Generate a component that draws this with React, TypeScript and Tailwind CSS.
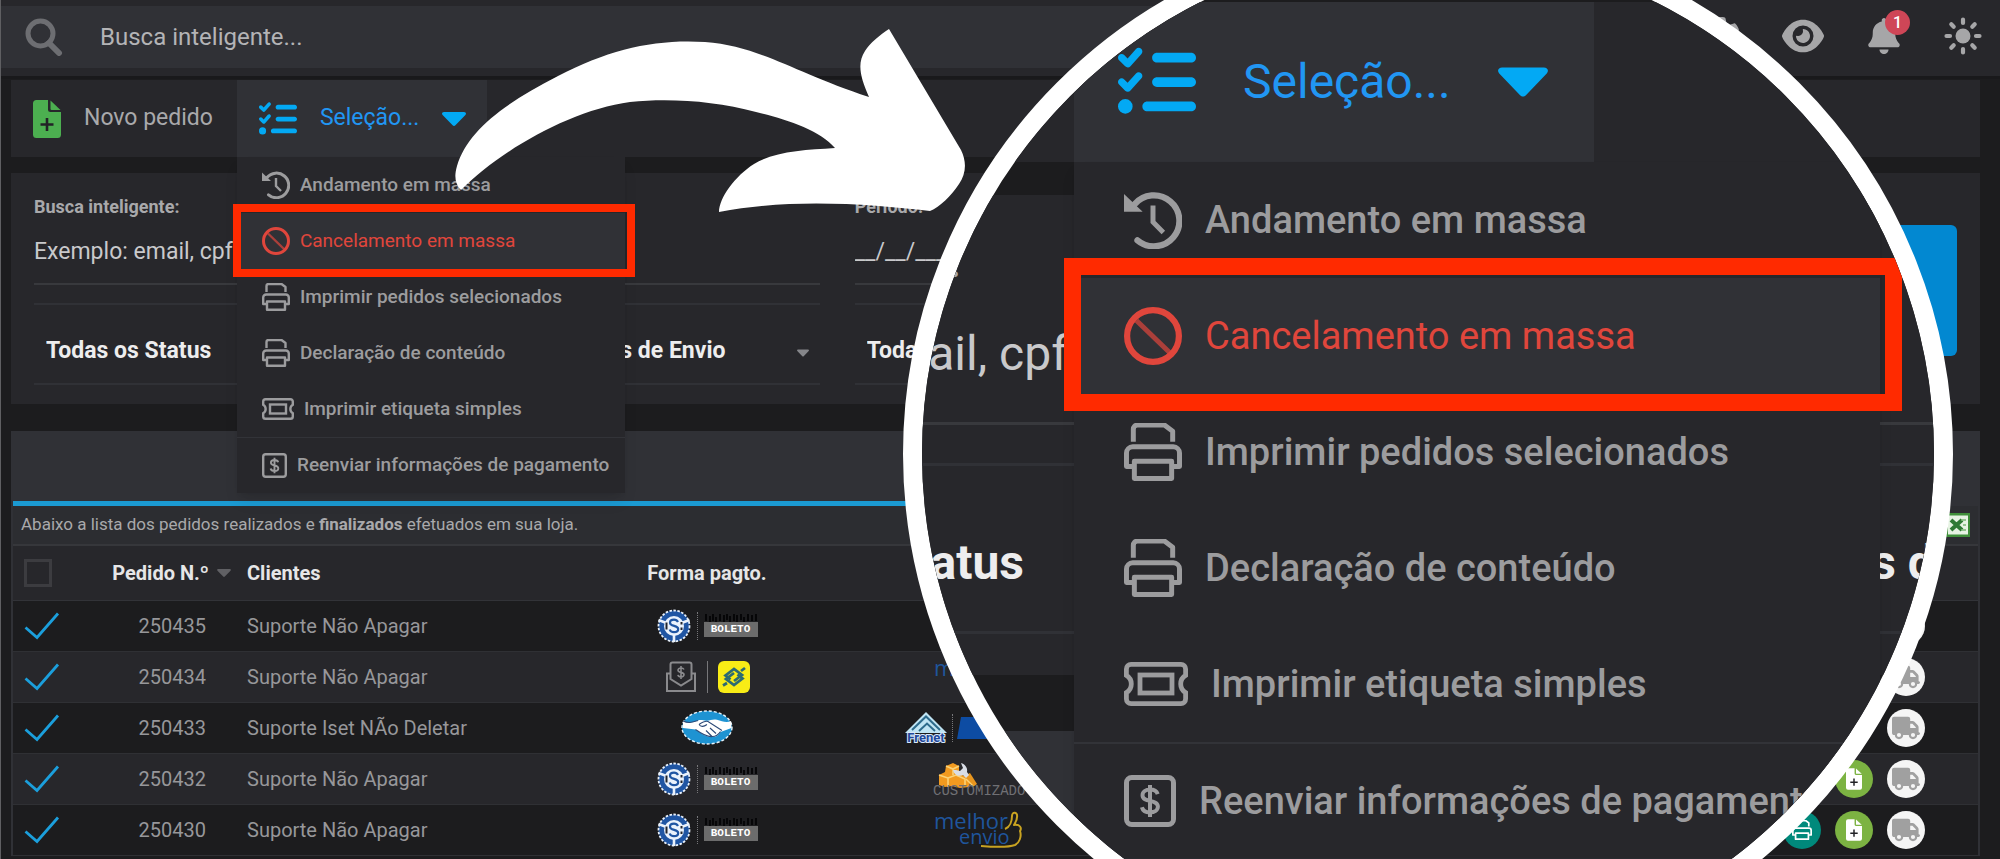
import React from 'react';
import { FaBell, FaEye, FaGear, FaListCheck, FaTruck } from 'react-icons/fa6';

type IconProps = { className?: string };
type Size = 'sm' | 'lg';

const SearchIcon = ({ className }: IconProps) => (
  <svg viewBox="0 0 38 38" fill="none" stroke="currentColor" className={className}>
    <circle cx="15.5" cy="15.5" r="12.5" strokeWidth="5" />
    <path d="M24 25l10 10" strokeWidth="6" strokeLinecap="round" />
  </svg>
);

const FilePlusIcon = ({ className }: IconProps) => (
  <svg viewBox="0 0 28 38" className={className}>
    <path d="M3.5 0H15v9.500a2.500 2.500 0 0 0 2.500 2.500H28v22.500a3.500 3.500 0 0 1-3.500 3.500h-21A3.500 3.500 0 0 1 0 34.500v-31A3.500 3.500 0 0 1 3.500 0z" fill="currentColor" />
    <path d="M17.500 .5L27.500 10h-9a1 1 0 0 1-1-1z" fill="currentColor" />
    <path d="M14 18v13M7.500 24.500h13" stroke="#222226" strokeWidth="2.6" />
  </svg>
);

const CaretIcon = ({ className }: IconProps) => (
  <svg viewBox="0 0 24 14" className={className}>
    <path d="M2 0h20c1.800 0 2.600 1.600 1.400 2.900L13.400 13.300c-.8.900-2 .9-2.800 0L.6 2.900C-.6 1.600.2 0 2 0z" fill="currentColor" />
  </svg>
);

const HistoryIcon = ({ className }: IconProps) => (
  <svg viewBox="0 0 28 28" fill="none" stroke="currentColor" className={className}>
    <path d="M5 6.500A12.300 12.300 0 1 1 6.500 23.800" strokeWidth="3" strokeLinecap="round" />
    <path d="M0 1.500l9 8.500H0z" fill="currentColor" stroke="none" />
    <path d="M14 7v8l5 5" strokeWidth="2.4" />
  </svg>
);

const BanIcon = ({ className }: IconProps) => (
  <svg viewBox="0 0 28 28" fill="none" stroke="currentColor" className={className}>
    <circle cx="14" cy="14" r="12.5" strokeWidth="3" />
    <path d="M6 6.500l16 15.500" strokeWidth="2.4" opacity=".7" />
  </svg>
);

const PrinterIcon = ({ className }: IconProps) => (
  <svg viewBox="0 0 28 28" fill="none" stroke="currentColor" strokeWidth="2.4" strokeLinejoin="round" className={className}>
    <path d="M4.500 9V3a2 2 0 0 1 2-2h13l4 3v5" />
    <path d="M4.500 21H1.200v-6.500a3 3 0 0 1 3-3h19.600a3 3 0 0 1 3 3V21h-3.300" />
    <path d="M5 18.500h18v8.300H5z" />
  </svg>
);

const TicketIcon = ({ className }: IconProps) => (
  <svg viewBox="0 0 32 22" fill="none" stroke="currentColor" strokeWidth="2.4" className={className}>
    <path d="M3.500 1.200h25a2.300 2.300 0 0 1 2.300 2.300v3.200a5 5 0 0 0 0 8.600v3.200a2.300 2.300 0 0 1-2.300 2.300h-25a2.300 2.300 0 0 1-2.300-2.300v-3.200a5 5 0 0 0 0-8.600V3.500a2.300 2.300 0 0 1 2.300-2.300z" />
    <rect x="8" y="6.5" width="16" height="9" />
  </svg>
);

const DollarIcon = ({ className }: IconProps) => (
  <svg viewBox="0 0 25 25" fill="none" stroke="currentColor" className={className}>
    <rect x="1.2" y="1.2" width="22.6" height="22.6" rx="2.5" strokeWidth="2.4" />
    <path d="M16.200 9.200c-.5-1.500-1.900-2.200-3.700-2.200-2 0-3.600 1-3.600 2.700 0 3.800 7.400 1.700 7.400 5.500 0 1.800-1.700 2.800-3.800 2.800s-3.500-.9-3.900-2.500M12.500 4.800v15.400" strokeWidth="1.9" />
  </svg>
);

const SunIcon = ({ className }: IconProps) => (
  <svg viewBox="0 0 38 38" fill="none" stroke="currentColor" strokeWidth="4.2" strokeLinecap="round" className={className}>
    <circle cx="19" cy="19" r="7.5" fill="currentColor" stroke="none" />
    <path d="M19 2.500v3.500M19 32v3.500M2.500 19H6M32 19h3.500M7.300 7.300l2.400 2.400M28.300 28.300l2.400 2.400M7.300 30.700l2.400-2.400M28.300 9.700l2.400-2.400" />
  </svg>
);

const TickIcon = ({ className }: IconProps) => (
  <svg viewBox="0 0 36 28" fill="none" stroke="#1b9fdc" strokeWidth="2.8" className={className}>
    <path d="M1.500 15.500L13 25.500 34 1.500" />
  </svg>
);

const DepositIcon = () => (
  <svg viewBox="0 0 32 32" fill="none" stroke="#8a8a8d" strokeWidth="2" className="size-8">
    <path d="M5 12.500H2v17.500h28V12.500h-3" />
    <path d="M5.500 18V3.500a2 2 0 0 1 2-2h17a2 2 0 0 1 2 2V18L16 24.500z" />
    <path d="M19 8.500c-.5-1-1.600-1.500-3-1.500-1.700 0-3 .8-3 2.200 0 3 6 1.400 6 4.400 0 1.500-1.400 2.300-3 2.300s-2.800-.7-3.100-2M16 5v13" strokeWidth="1.6" />
  </svg>
);

const IssIcon = () => (
  <svg viewBox="0 0 34 34" className="size-[34px]">
    <circle cx="17" cy="17" r="15.5" fill="#1f55a3" stroke="#e9f1fb" strokeWidth="1.8" strokeDasharray="2.5 1.500" />
    <circle cx="17" cy="17" r="10" fill="#eaf2fc" />
    <path d="M1.500 11l8 3M32.500 11l-8 3M17 25v8" stroke="#eaf2fc" strokeWidth="2.6" />
    <path d="M21 13c-.8-1.600-2.200-2.300-4-2.300-2.300 0-4 1.100-4 3 0 4.200 8.200 2.200 8.200 6.300 0 2-1.900 3.200-4.200 3.200-2.200 0-3.800-1-4.300-2.700" fill="none" stroke="#1f55a3" strokeWidth="2.2" />
    <path d="M9.500 13.500v7M24.500 13v2.500M24.500 18.500v2.500" stroke="#20242c" strokeWidth="2" />
  </svg>
);

const BbIcon = () => (
  <svg viewBox="0 0 32 32" className="size-8">
    <rect width="32" height="32" rx="6" fill="#f8ec16" />
    <g fill="none" stroke="#2c6a72" strokeWidth="2.8">
      <path d="M12.500 18.500L7.500 14.500 16 8l8 6-8 6" />
      <path d="M19.500 13.500l5 4L16 24l-8-6 8-6" />
      <path d="M5 24.500l4-2.500M23 10l4-3" />
    </g>
  </svg>
);

const HandshakeIcon = () => (
  <svg viewBox="0 0 52 35" className="h-[35px] w-[52px]">
    <ellipse cx="26" cy="17.5" rx="25" ry="16.5" fill="#1e93d2" stroke="#e8f4fc" strokeWidth="1.4" strokeDasharray="3 2" />
    <path d="M2 11c6 3 10 1 15-.5 4-1.200 6 .6 9 .2 3.500-.4 6-2 10-1 5 1.300 9 3.500 14 1.300l.5 7-11 4c-2 3-4 5-8 5-6 .7-12-4-17-7.500L2 18z" fill="#fff" />
    <path d="M2 11c6 3 10 1 15-.5M18 14.500c3-2 6-4 9-3l14 9M25 20.500l6 6M29 18l6 5.500M18 14.500c2 3 5 2 8 0M14.500 19.500c5 3.500 11 8 17 7 4 0 6-2 8-5" fill="none" stroke="#2d4a78" strokeWidth="1.1" />
  </svg>
);

const FrenetIcon = () => (
  <svg viewBox="0 0 44 32" className="h-8 w-11">
    <path d="M22 0l21 21H1z" fill="#bfe4f3" />
    <path d="M8 18L22 4.500 36 18M15 19l8-7.500L31 19" fill="none" stroke="#2d6b8c" strokeWidth="2" />
    <text x="22" y="30" textAnchor="middle" fontSize="13" fontWeight="700" fill="#20489a" stroke="#dbe9fa" strokeWidth="2" paintOrder="stroke" fontFamily="Roboto">Frenet</text>
  </svg>
);

const CustomizadoIcon = () => (
  <svg viewBox="0 0 92 34" className="h-[34px] w-[92px]">
    <path d="M6 13l6-3 1-6 7-3 6 3v8l12 4-2 9-9 1-8-2-7 1-6-2z" fill="#f29a1f" />
    <path d="M6 13l9 3v9M15 16l8-3 9 4v7M13 4l7 3 6-3M20 7v6" fill="none" stroke="#fbd277" strokeWidth="1.6" />
    <path d="M31 14l9 11 4-3-7-11z" fill="#e8961f" />
    <path d="M33 17l7 7" stroke="#fbd277" strokeWidth="1.4" />
    <path d="M20 8c1 5 6 7 10 5l3 3 3-3-2-3c1-4-2-8-6-9l2 5-3 3-4-1z" fill="#d9dde6" />
    <text x="0" y="33" fontSize="14" fill="#707074" fontFamily="Liberation Mono">CUSTOMIZADO</text>
  </svg>
);

const MelhorEnvioIcon = () => (
  <svg viewBox="0 0 90 38" className="h-[38px] w-[90px]">
    <text x="0" y="18" fontSize="22" fill="#1f559c" fontFamily="Open Sans">melhor</text>
    <text x="25" y="33" fontSize="20" fill="#1f559c" fontFamily="Open Sans">envio</text>
    <path d="M71 18c5-2 7-8 7-13 0-5 6-4 5 1 0 4-2 6-3 8 6-1 8 3 6 6 2 6-1 12-5 14-8 3-22 2-34 1" fill="none" stroke="#c9a321" strokeWidth="2" strokeLinejoin="round" />
  </svg>
);

const ExcelIcon = () => (
  <svg viewBox="0 0 24 24" className="size-6">
    <rect width="24" height="24" fill="#3f8f3a" />
    <rect x="2" y="2.5" width="20" height="19" fill="#e6f3e3" />
    <path d="M5 7l11 10M16 7L5 17" stroke="#2f7a35" strokeWidth="4" />
    <path d="M15 7h5M17 12h3M15 17h5" stroke="#7ab874" strokeWidth="1.5" />
  </svg>
);

const Boleto = () => (
  <span className="flex w-[54px] flex-col">
    <svg viewBox="0 0 54 8" className="h-2 w-full">
      <path d="M2 0v7M6 2v6M9 0v7M12 3v5M16 0v7M20 1v7M23 0v6M26 2v6M30 0v7M33 1v7M37 0v6M40 3v5M44 0v7M48 1v6M52 0v7" stroke="#050506" strokeWidth="1.8" />
    </svg>
    <span className="bg-[#6c6c6c] text-center font-['Liberation_Mono',monospace] text-[11px] leading-[15px] font-bold text-white">BOLETO</span>
  </span>
);

const Divider = () => <span className="h-7 border-l border-dotted border-[#77777a]" />;

const menuItems = [
  { label: 'Andamento em massa', icon: HistoryIcon, shape: 'square' },
  { label: 'Cancelamento em massa', icon: BanIcon, shape: 'square', danger: true },
  { label: 'Imprimir pedidos selecionados', icon: PrinterIcon, shape: 'square' },
  { label: 'Declaração de conteúdo', icon: PrinterIcon, shape: 'square' },
  { label: 'Imprimir etiqueta simples', icon: TicketIcon, shape: 'wide' },
  { label: 'Reenviar informações de pagamento', icon: DollarIcon, shape: 'small', divided: true },
];

const menuStyles = {
  sm: {
    menu: 'w-[388px]',
    item: 'h-14 pl-[25px] gap-[10px] text-[19px]',
    frame: '-top-[9px] -bottom-2 -left-1 -right-[10px] border-8',
    border: 'border-t',
    icon: { square: 'size-7', wide: 'h-[22px] w-8', small: 'size-[25px]' } as Record<string, string>,
  },
  lg: {
    menu: 'w-[806px]',
    item: 'h-[116px] pl-[50px] gap-[23px] text-[38px]',
    frame: '-top-[20px] -bottom-[17px] -left-[10px] -right-[22px] border-[17px]',
    border: 'border-t-2',
    icon: { square: 'size-[58px]', wide: 'h-[46px] w-16', small: 'size-[52px]' } as Record<string, string>,
  },
};

const SelectionMenu: React.FC<{ size: Size }> = ({ size }) => {
  const s = menuStyles[size];
  return (
    <div className={`absolute top-full left-0 z-10 bg-[#27272b] shadow-lg ${s.menu}`}>
      {menuItems.map(({ label, icon: Icon, shape, danger, divided }) => (
        <button
          key={label}
          type="button"
          className={`relative flex w-full items-center whitespace-nowrap ${s.item} ${
            danger ? 'z-10 bg-[#303136] text-[#e0463c]' : 'font-medium text-[#9c9c9e]'
          } ${divided ? `border-[#323338] ${s.border}` : ''}`}
        >
          <Icon className={`shrink-0 ${s.icon[shape]}`} />
          <span>{label}</span>
          {danger && <span className={`absolute border-[#ff2a00] ${s.frame}`} />}
        </button>
      ))}
    </div>
  );
};

const TopBar = () => (
  <header className="flex h-[79px] border-b-[3px] border-[#19191b] bg-[#27272b]">
    <label className="my-[6px] flex h-[62px] flex-[0_1_1500px] items-center gap-[37px] bg-[#303136] pl-6">
      <SearchIcon className="size-[38px] shrink-0 text-[#6d6e72]" />
      <input
        type="text"
        aria-label="Busca inteligente"
        placeholder="Busca inteligente..."
        className="w-full bg-transparent text-2xl text-[#b4b4b6] outline-none placeholder:text-[#b4b4b6]"
      />
    </label>
    <div className="flex flex-1 items-center justify-end gap-[42px] pr-[18px] pb-1 text-[#a6a6a8]">
      <button type="button" aria-label="Configurações"><FaGear className="size-[38px]" /></button>
      <button type="button" aria-label="Visualizar"><FaEye className="size-[42px]" /></button>
      <button type="button" aria-label="Notificações" className="relative">
        <FaBell className="size-9" />
        <span className="absolute -top-2 -right-2 flex size-[25px] items-center justify-center rounded-full bg-[#cf4657] text-base font-medium text-white">1</span>
      </button>
      <button type="button" aria-label="Tema"><SunIcon className="size-[38px]" /></button>
    </div>
  </header>
);

const Toolbar = () => (
  <nav className="mt-px mr-5 ml-[10px] flex h-[77px] bg-[#27272b]">
    <button type="button" className="flex items-center gap-[23px] pr-6 pl-[22px] text-[23px] text-[#a9a9ab]">
      <FilePlusIcon className="h-[38px] w-7 text-[#4caf50]" />
      Novo pedido
    </button>
    <div className="relative">
      <button type="button" className="flex h-full items-center gap-[23px] bg-[#303136] pr-[21px] pl-[22px] text-[23px] text-[#2196f3]">
        <FaListCheck className="size-[38px] text-[#03a9f4]" />
        Seleção...
        <CaretIcon className="h-[14px] w-6 text-[#03a9f4]" />
      </button>
      <SelectionMenu size="sm" />
    </div>
  </nav>
);

const FilterSelect = ({ label }: { label: string }) => (
  <div className="relative border-y-2 border-[#303136]">
    <select aria-label={label} className="h-[78px] w-full appearance-none bg-transparent pt-[14px] pl-3 text-[23px] font-bold text-[#ededee] outline-none">
      <option>{label}</option>
    </select>
    <CaretIcon className="absolute top-11 right-[11px] h-2 w-3 text-[#85868a]" />
  </div>
);

const Filters = () => (
  <section className="mt-4 mr-5 ml-[10px] grid grid-cols-[4fr_4fr_4fr_4fr_3fr] gap-x-[35px] gap-y-[18px] bg-[#27272b] px-[23px] pt-[22px] pb-[19px]">
    <div className="col-span-2 border-b-2 border-[#38393d]">
      <label htmlFor="busca" className="block text-lg leading-6 font-bold text-[#a9a9ab]">Busca inteligente:</label>
      <input id="busca" type="text" placeholder="Exemplo: email, cpf" className="h-16 w-full bg-transparent text-[23px] outline-none placeholder:text-[#c9c9cb]" />
    </div>
    <div className="col-span-2 border-b-2 border-[#38393d]">
      <label htmlFor="periodo" className="block text-lg leading-6 font-bold text-[#a9a9ab]">Período:</label>
      <input id="periodo" type="text" placeholder="__/__/____" className="h-16 w-full bg-transparent text-[23px] outline-none placeholder:text-[#c9c9cb]" />
    </div>
    <button type="button" aria-label="Buscar" className="row-span-2 mt-[30px] h-[131px] rounded-md bg-[#0288d1]" />
    <FilterSelect label="Todas os Status" />
    <FilterSelect label="Todas as Formas de Envio" />
    <FilterSelect label="Todas" />
    <FilterSelect label="Todos" />
  </section>
);

interface Order {
  id: number;
  client: string;
  payment: React.ReactNode;
  shipping: React.ReactNode;
  actions: number;
}

const issBoleto = (
  <>
    <IssIcon />
    <Divider />
    <Boleto />
  </>
);

const orders: Order[] = [
  { id: 250435, client: 'Suporte Não Apagar', payment: issBoleto, shipping: null, actions: 1 },
  {
    id: 250434,
    client: 'Suporte Não Apagar',
    payment: (
      <>
        <DepositIcon />
        <span className="mx-1 h-8 border-l border-[#77777a]" />
        <BbIcon />
      </>
    ),
    shipping: <MelhorEnvioIcon />,
    actions: 1,
  },
  {
    id: 250433,
    client: 'Suporte Iset NÃo Deletar',
    payment: <HandshakeIcon />,
    shipping: (
      <>
        <FrenetIcon />
        <Divider />
        <svg viewBox="0 0 96 22" className="h-[22px] w-24"><path d="M4 0h92v22H0z" fill="#0d4ca3" /></svg>
      </>
    ),
    actions: 1,
  },
  { id: 250432, client: 'Suporte Não Apagar', payment: issBoleto, shipping: <CustomizadoIcon />, actions: 2 },
  { id: 250430, client: 'Suporte Não Apagar', payment: issBoleto, shipping: <MelhorEnvioIcon />, actions: 3 },
];

const Orders = () => (
  <section className="mt-[27px] mr-5 ml-[10px] border-x-2 border-[#303136] bg-[#27272b]">
    <div className="h-[70px] bg-[#303136]" />
    <div className="h-[5px] bg-[#303136]">
      <div className="h-full w-1/2 bg-[#1b9ad2]" />
    </div>
    <div className="flex h-[40px] items-center justify-between border-b-2 border-[#36373b] bg-[#2c2d31] px-2 text-[17px] text-[#a9a9ab]">
      <p>Abaixo a lista dos pedidos realizados e <b>finalizados</b> efetuados em sua loja.</p>
      <a href="#excel" aria-label="Exportar"><ExcelIcon /></a>
    </div>
    <table className="w-full table-fixed text-left text-xl text-[#97979a]">
      <colgroup>
        <col className="w-[86px]" />
        <col className="w-[142px]" />
        <col className="w-[300px]" />
        <col className="w-[332px]" />
        <col className="w-[211px]" />
        <col />
      </colgroup>
      <thead>
        <tr className="h-[54px] border-b border-[#323338] text-[#e6e6e7]">
          <th className="pl-[11px]">
            <input type="checkbox" aria-label="Selecionar todos" className="block size-7 appearance-none border-[3px] border-[#3c3c40]" />
          </th>
          <th>
            <span className="flex items-center justify-end gap-2 pr-[10px] whitespace-nowrap">
              Pedido N.º
              <CaretIcon className="h-2 w-[14px] text-[#606064]" />
            </span>
          </th>
          <th className="pl-[6px]">Clientes</th>
          <th className="text-center">Forma pagto.</th>
          <th aria-label="Envio" />
          <th aria-label="Ações" />
        </tr>
      </thead>
      <tbody>
        {orders.map((order) => (
          <tr key={order.id} className="h-[51px] border-b border-[#2f3034] odd:bg-[#1c1c1e]">
            <td className="pl-[11px]"><TickIcon className="h-7 w-9" /></td>
            <td className="pr-[35px] text-right">{order.id}</td>
            <td className="pl-[6px]">{order.client}</td>
            <td><div className="flex items-center justify-center gap-[6px]">{order.payment}</div></td>
            <td><div className="flex items-center justify-center gap-1">{order.shipping}</div></td>
            <td>
              <div className="flex justify-end gap-[14px] pr-[53px] text-white">
                {order.actions > 2 && (
                  <button type="button" aria-label="Imprimir" className="flex size-[38px] items-center justify-center rounded-full bg-[#00897b]"><PrinterIcon className="size-5" /></button>
                )}
                {order.actions > 1 && (
                  <button type="button" aria-label="Nota" className="flex size-[38px] items-center justify-center rounded-full bg-[#7cb342]"><FilePlusIcon className="h-[22px] w-4" /></button>
                )}
                <button type="button" aria-label="Rastrear" className="flex size-[38px] items-center justify-center rounded-full bg-[#f5f5f5] text-[#a0a0a0]"><FaTruck className="size-7" /></button>
              </div>
            </td>
          </tr>
        ))}
      </tbody>
    </table>
  </section>
);

const Arrow = () => (
  <svg viewBox="0 0 520 190" fill="#fff" className="pointer-events-none absolute top-[26px] left-[449px] z-20 h-[190px] w-[520px]">
    <path d="M11 164C5 158 4 150 7 140C17 105 55 77 108 50C160 23 205 13 255 16C310 20 345 47 419 71C410 51 407 37 415 25C420 17 430 9 439 3L511 124C517 136 516 148 509 158C501 170 490 181 480 185C420 178 340 172 269 186C269 172 285 150 304 138C325 125 355 124 385 122C370 104 335 93 306 86C265 75 220 72 180 76C120 84 50 125 11 164Z" />
  </svg>
);

// Magnified copy of the selection menu shown in a round lens
const Lens = () => (
  <aside aria-label="Ampliação" className="absolute -top-[71px] left-[902px] z-30 size-[1050px] overflow-hidden rounded-full border-[19px] border-white bg-[#1c1c1e] pt-[54px]">
    <div className="-ml-[317px] w-[1700px]">
      <div className="flex h-40 bg-[#27272b] pl-[469px]">
        <div className="relative">
          <div className="flex h-full w-[520px] items-center gap-[47px] bg-[#303136] pl-11 text-[48px] text-[#2196f3]">
            <FaListCheck className="size-[78px] shrink-0 text-[#03a9f4]" />
            <span>Seleção...</span>
            <CaretIcon className="h-[30px] w-[50px] text-[#03a9f4]" />
          </div>
          <SelectionMenu size="lg" />
        </div>
      </div>
      <div className="mt-[33px] bg-[#27272b] px-12 pt-11 pb-[41px] whitespace-nowrap">
        <p className="text-[38px] leading-[50px] font-bold text-[#a9a9ab]">Busca inteligente:</p>
        <p className="h-[136px] border-b-3 border-[#38393d] text-[48px] leading-[130px] text-[#c9c9cb]">Exemplo: email, cpf</p>
        <div className="mt-[38px] flex h-[171px] border-y-3 border-[#303136] pl-[26px] text-[48px] leading-[194px] font-bold text-[#ededee]">
          <p className="w-[850px]">Todas os Status</p>
          <p>Todas as Formas de Envio</p>
        </div>
      </div>
      <div className="mt-14 h-[300px] bg-[#303136]" />
    </div>
  </aside>
);

export default function App() {
  return (
    <div className="relative h-screen overflow-hidden border-l border-[#5f5f62] bg-[#1c1c1e] font-[Roboto,sans-serif]">
      <TopBar />
      <main>
        <Toolbar />
        <Filters />
        <Orders />
      </main>
      <Arrow />
      <Lens />
    </div>
  );
}
